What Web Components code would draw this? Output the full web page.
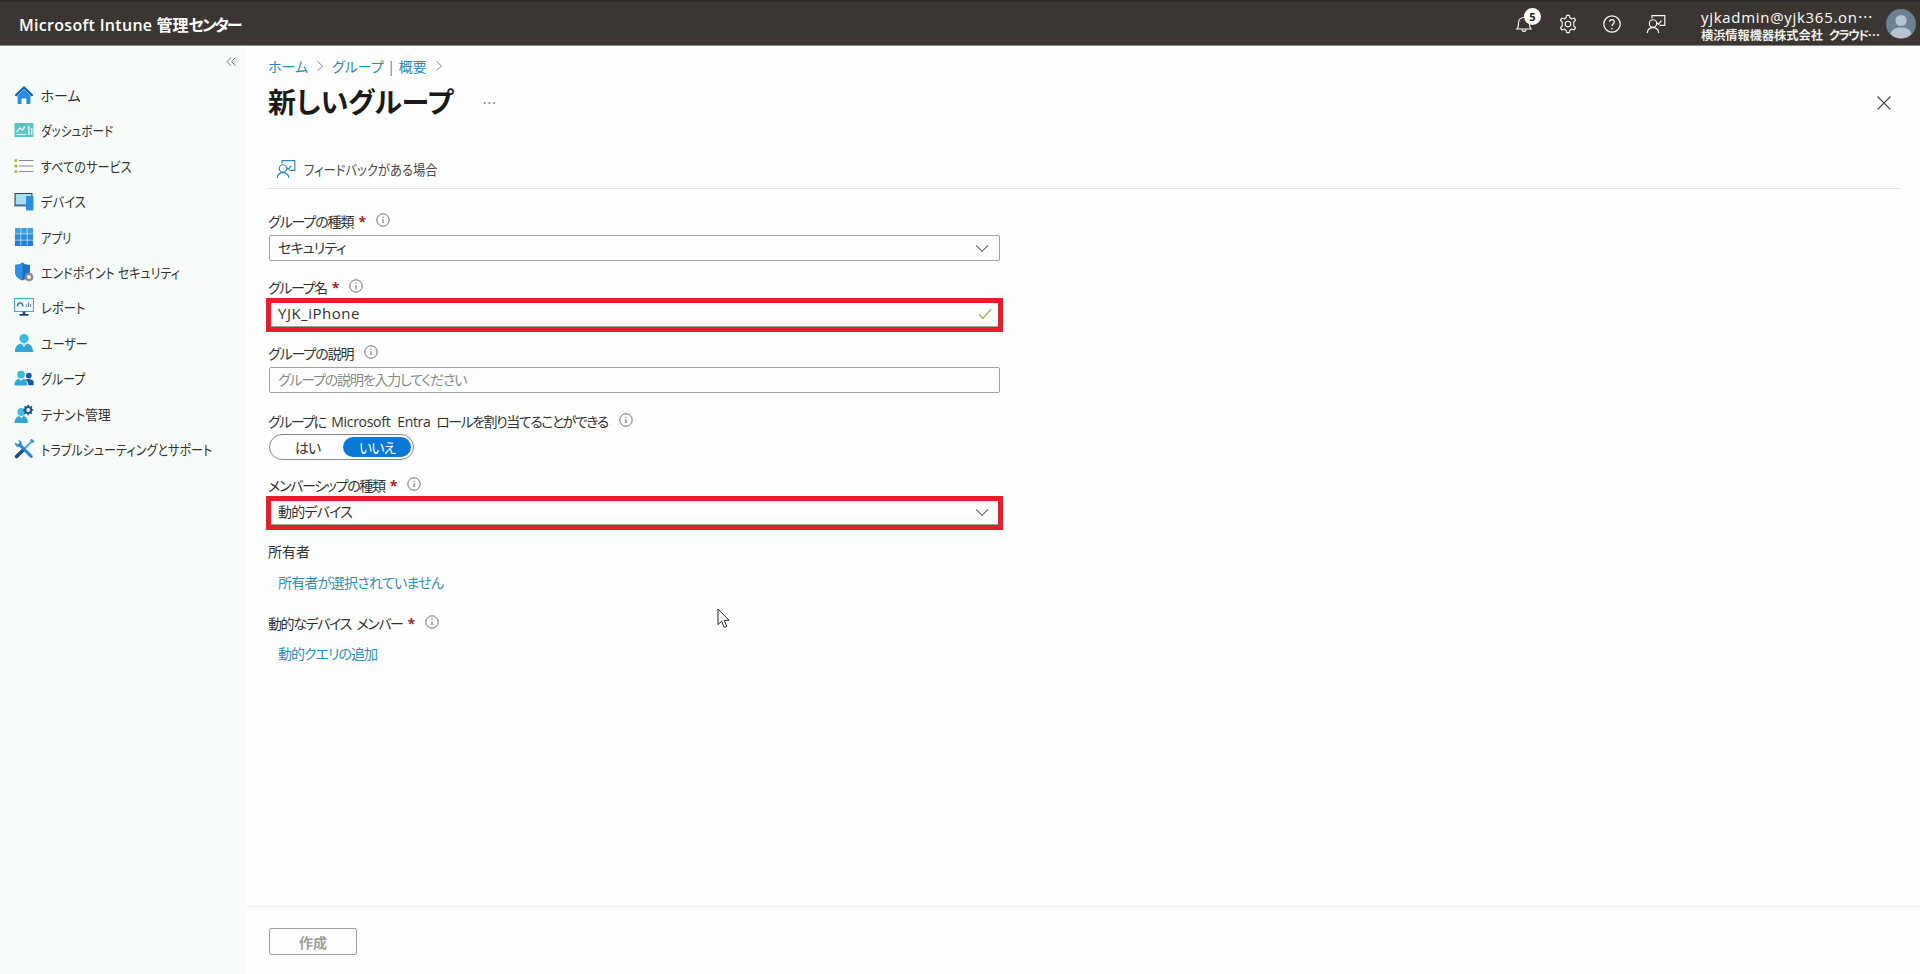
<!DOCTYPE html>
<html lang="ja"><head><meta charset="utf-8"><title>新しいグループ</title>
<style>
html,body{margin:0;padding:0;height:100%;overflow:hidden}
body{font-family:"Open Sans","Noto Sans CJK JP",sans-serif;font-size:14px;color:#323130;background:#fdfffe;font-feature-settings:"palt"}
</style></head><body>
<ms-app>
  <ms-header slot="header"></ms-header>
  <ms-sidebar slot="side">
    <ms-nav-item icon="home" sx="1">ホーム</ms-nav-item>
    <ms-nav-item icon="dash" sx=".83">ダッシュボード</ms-nav-item>
    <ms-nav-item icon="list" sx=".87">すべてのサービス</ms-nav-item>
    <ms-nav-item icon="device" sx=".88">デバイス</ms-nav-item>
    <ms-nav-item icon="apps" sx=".81">アプリ</ms-nav-item>
    <ms-nav-item icon="shield" sx=".857">エンドポイント セキュリティ</ms-nav-item>
    <ms-nav-item icon="report" sx=".88">レポート</ms-nav-item>
    <ms-nav-item icon="user" sx=".86">ユーザー</ms-nav-item>
    <ms-nav-item icon="group" sx=".86">グループ</ms-nav-item>
    <ms-nav-item icon="tenant" sx=".9">テナント管理</ms-nav-item>
    <ms-nav-item icon="tools" sx=".864">トラブルシューティングとサポート</ms-nav-item>
  </ms-sidebar>
  <ms-blade slot="main">
    <ms-field label="グループの種類" required gap="0"><ms-control kind="select" value="セキュリティ" ls="-.8"></ms-control></ms-field>
    <ms-field label="グループ名" required gap="16" ls="-1.4"><ms-control kind="check" value="YJK_iPhone" marked ls=".5" fs="15"></ms-control></ms-field>
    <ms-field label="グループの説明" gap="16"><ms-control placeholder="グループの説明を入力してください" ls="-1.2"></ms-control></ms-field>
    <ms-field label="グループに |Microsoft Entra| ロールを割り当てることができる" gap="18" tight ls="-1.5"><ms-toggle></ms-toggle></ms-field>
    <ms-field label="メンバーシップの種類" required gap="15" ls="-1.3"><ms-control kind="select" value="動的デバイス" marked ls="-.8"></ms-control></ms-field>
    <ms-field label="所有者" noinfo gap="16" ls="0"><ms-link style="margin-top:12px" ls="-.75">所有者が選択されていません</ms-link></ms-field>
    <ms-field label="動的なデバイス メンバー" required gap="20" ls="-1.4"><ms-link style="margin-top:11px" ls="-1">動的クエリの追加</ms-link></ms-field>
  </ms-blade>
</ms-app>
<script>
const ICONS={
home:`<svg viewBox="0 0 20 20" width="20" height="20"><path d="M10 1 L0.6 10 L2.2 11.4 L10 4 L17.8 11.4 L19.4 10Z" fill="#0f5fa8"/><path d="M3.6 10.4 L10 4.4 L16.4 10.4 V19 H12.4 V13.4 H7.6 V19 H3.6Z" fill="#2b8fe0"/></svg>`,
dash:`<svg viewBox="0 0 20 20" width="20" height="20"><rect x="0.5" y="3" width="19" height="14" fill="#5cc3c8"/><path d="M2.5 12 L6 8 L8.5 10 L11 6.5" fill="none" stroke="#e8f7f2" stroke-width="1.4"/><path d="M2.5 14.5 H12" stroke="#e8f7f2" stroke-width="1.2"/><rect x="14" y="6" width="1.6" height="9" fill="#e8f7f2"/><rect x="17" y="8" width="1.4" height="7" fill="#e8f7f2"/></svg>`,
list:`<svg viewBox="0 0 20 20" width="20" height="20"><g stroke="#8a8a8a" stroke-width="1.2"><path d="M5 4.5H19.5M5 10H19.5M5 15.5H19.5"/></g><g fill="#8fc03c"><circle cx="1.8" cy="4.5" r="1.5"/><circle cx="1.8" cy="10" r="1.5"/><circle cx="1.8" cy="15.5" r="1.5"/></g></svg>`,
device:`<svg viewBox="0 0 20 20" width="20" height="20"><rect x="0.5" y="2" width="18" height="13" fill="#36404d"/><rect x="1.6" y="3" width="15.8" height="10.6" fill="#a9def2"/><rect x="12" y="5" width="7.5" height="14.5" rx="0.8" fill="#2b8fe0"/><rect x="0.5" y="14" width="11.5" height="1.4" fill="#2e6fb0"/></svg>`,
apps:`<svg viewBox="0 0 20 20" width="20" height="20"><g fill="#1f7fd4"><rect x="1" y="1" width="5.6" height="5.6" fill="#3fa0e6"/><rect x="7.2" y="1" width="5.6" height="5.6" fill="#3fa0e6"/><rect x="13.4" y="1" width="5.6" height="5.6" fill="#3fa0e6"/><rect x="1" y="7.2" width="5.6" height="5.6" fill="#2a8bdd"/><rect x="7.2" y="7.2" width="5.6" height="5.6" fill="#2a8bdd"/><rect x="13.4" y="7.2" width="5.6" height="5.6" fill="#2a8bdd"/><rect x="1" y="13.4" width="5.6" height="5.6"/><rect x="7.2" y="13.4" width="5.6" height="5.6"/><rect x="13.4" y="13.4" width="5.6" height="5.6"/></g></svg>`,
shield:`<svg viewBox="0 0 20 20" width="20" height="20"><path d="M8.5 0.6 C6 2.6 3.4 3 1 3 V9.5 C1 14 4.2 16.8 8.5 18.6 C12.8 16.8 16 14 16 9.5 V3 C13.6 3 11 2.6 8.5 0.6Z" fill="#1f6fc4"/><path d="M8.5 0.6 V18.6 C4.2 16.8 1 14 1 9.5 V3 C3.4 3 6 2.6 8.5 0.6Z" fill="#2f8fe0"/><circle cx="15" cy="15" r="3" fill="#f8fcf9" stroke="#8a8d90" stroke-width="2.2"/><g stroke="#8a8d90" stroke-width="1.5"><path d="M15 10.5V12M15 18V19.5M10.5 15H12M18 15H19.5M11.8 11.8L12.9 12.9M17.1 17.1L18.2 18.2M18.2 11.8L17.1 12.9M12.9 17.1L11.8 18.2"/></g></svg>`,
report:`<svg viewBox="0 0 20 20" width="20" height="20"><rect x="0.5" y="1.5" width="19" height="13" fill="#eaf6fb" stroke="#4aa5c9" stroke-width="1"/><path d="M3.8 9.5 A2.6 2.6 0 1 1 8.6 9.5" fill="none" stroke="#1d6ea8" stroke-width="1.3"/><path d="M12.5 10V7.5M14.5 10V5.5M16.5 10V7" stroke="#7c8a94" stroke-width="1.2"/><rect x="8.6" y="14.5" width="2.8" height="2.8" fill="#1a4f86"/><rect x="5.5" y="17" width="9" height="1.8" fill="#1a4f86"/></svg>`,
user:`<svg viewBox="0 0 20 20" width="20" height="20"><circle cx="10" cy="5.6" r="4.6" fill="#3bbbe0"/><path d="M1 19 C1 13 4.5 11 7 10.6 L10 14 L13 10.6 C15.5 11 19 13 19 19Z" fill="#2fa8d4"/><path d="M7.6 10.6 L10 13.6 L12.4 10.6Z" fill="#a9e3f3"/></svg>`,
group:`<svg viewBox="0 0 20 20" width="20" height="20"><circle cx="7" cy="6.6" r="3.9" fill="#3bbbe0"/><path d="M0.4 17.6 C0.4 13 3 11 5 10.8 L7 13 L9 10.8 C11 11 13.4 13 13.4 17.6Z" fill="#2fa8d4"/><circle cx="14.8" cy="7.6" r="2.9" fill="#1f5aa0"/><path d="M11 11.4 C13 10.6 17 10.6 19.6 13 V17.2 H14.4 C14.4 14.5 13 12.5 11 11.4Z" fill="#1f5aa0"/></svg>`,
tenant:`<svg viewBox="0 0 20 20" width="20" height="20"><circle cx="7.4" cy="8" r="3.9" fill="#3bbbe0"/><path d="M0.6 19 C0.6 14.4 3.4 12.2 5.4 12 L7.4 14.2 L9.4 12 C11.4 12.2 14 14.4 14 19Z" fill="#2fa8d4"/><circle cx="14.2" cy="6" r="3" fill="none" stroke="#1f5aa0" stroke-width="2.2"/><path d="M14.2 .8V2.5M14.2 9.5V11.2M9 6H10.7M17.7 6H19.4M10.5 2.3L11.7 3.5M16.7 8.5L17.9 9.7M17.9 2.3L16.7 3.5M11.7 8.5L10.5 9.7" stroke="#1f5aa0" stroke-width="1.7"/></svg>`,
tools:`<svg viewBox="0 0 20 20" width="20" height="20" fill="none" stroke-linecap="round"><path d="M18.6 1.6 L11 9.2" stroke="#3aa0e4" stroke-width="1.9"/><path d="M17.4 1.2 L19 2.8" stroke="#2f8fd8" stroke-width="2.2"/><path d="M9.8 10.4 L2.6 17.6" stroke="#1c4f80" stroke-width="3.6"/><path d="M6.2 6.4 L17.2 17.4" stroke="#2a86d6" stroke-width="3"/><path d="M1.2 4.2 C1 7.4 4.4 8.6 6.6 6.8 C8.2 5 7.4 1.8 4.6 1 L6 3.6 L4 5.6Z" fill="#2a86d6" stroke="#2a86d6" stroke-width=".5" stroke-linejoin="round"/></svg>`,
info:`<svg viewBox="0 0 14 14" width="14" height="14"><circle cx="7" cy="7" r="6.2" fill="none" stroke="#605e5c" stroke-width=".9"/><path d="M7 6.2V10.2" stroke="#605e5c" stroke-width="1"/><circle cx="7" cy="4.2" r=".65" fill="#605e5c"/></svg>`,
chev:`<svg viewBox="0 0 16 10" width="14" height="9" style="margin-right:2px"><path d="M1.2 1.4 L8 8.2 L14.8 1.4" fill="none" stroke="#605e5c" stroke-width="1.2"/></svg>`,
check:`<svg viewBox="0 0 14 12" width="14" height="12" style="margin-right:-1px"><path d="M1 6.4 L4.8 10.4 L13 1.4" fill="none" stroke="#7fb23a" stroke-width="1.2"/></svg>`,
feedback:c=>`<svg viewBox="0 0 20 20" width="20" height="20" fill="none" stroke="${c}" stroke-width="1.15"><circle cx="7" cy="9.4" r="3.7"/><path d="M1.2 19 C1.6 15.4 4 13.6 7 13.6 C10 13.6 12.4 15.4 12.8 19"/><path d="M6 4.6 V1.6 H18.8 V11.4 H13.4"/><path d="M10.6 8.4 L12.4 10.4 L15.4 6.6"/></svg>`,
};
const CJK='"Noto Sans CJK JP",sans-serif';
function def(name,css,html){
  class C extends HTMLElement{
    constructor(){super();this.attachShadow({mode:"open"})}
    connectedCallback(){const a=n=>this.getAttribute(n),h=n=>this.hasAttribute(n);
      this.shadowRoot.innerHTML=`<style>${css}</style>`+html(a,h,this)}
  }
  customElements.define(name,C);
}
def("ms-app",`:host{display:grid;grid-template-rows:46px 1fr;grid-template-columns:246px 1fr;height:974px;width:1920px}
 ::slotted([slot=header]){grid-column:1/3}`,
 ()=>`<slot name="header"></slot><slot name="side"></slot><slot name="main"></slot>`);
def("ms-header",`:host{display:flex;align-items:center;height:46px;box-sizing:border-box;background:#3b3631;border-top:2px solid #2a2a2a;border-bottom:1px solid #8d8a86;color:#fff;padding-left:19px;position:relative}
 .brand{font-size:16px;font-weight:600;white-space:nowrap;flex:1}
 .brand b{font-weight:600;letter-spacing:.3px}
 .brand i{font-style:normal;letter-spacing:-2px}
 .ic{width:44px;display:flex;justify-content:center;align-items:center;position:relative;top:.5px}
 .badge{position:absolute;left:22px;top:-6px;width:17px;height:17px;border-radius:50%;background:#fff;color:#222;font-size:11px;font-weight:700;display:flex;align-items:center;justify-content:center;line-height:1}
 .user{width:176px;margin-left:23px;display:flex;flex-direction:column;color:#fff;padding-top:4px}
 .u1{font-size:15px;line-height:19px;white-space:nowrap;letter-spacing:.7px}
 .u2{font-size:12.2px;font-weight:700;line-height:16px;white-space:nowrap;color:#eee}
 .u2 i{font-style:normal;letter-spacing:-1.4px;margin-left:6px}
 .e{font-family:${CJK};letter-spacing:0}
 .av{width:30px;height:30px;margin:0 4px 0 9px;flex:none}`,
 ()=>`<div class="brand"><b>Microsoft Intune</b> 管理<i>センター</i></div>
 <div class="ic"><svg viewBox="0 0 20 20" width="20" height="20" fill="none" stroke="#fff" stroke-width="1.1"><path d="M3 15 C4.5 13.5 4.5 12 4.5 9 C4.5 5.5 7 3.5 10 3.5 C13 3.5 15.5 5.5 15.5 9 C15.5 12 15.5 13.5 17 15Z"/><path d="M8 15.5 C8 18 12 18 12 15.5"/></svg><span class="badge">5</span></div>
 <div class="ic"><svg viewBox="0 0 20 20" width="20" height="20" fill="none" stroke="#fff" stroke-width="1.1"><circle cx="10" cy="10" r="2.8"/><path d="M8.6 1.4 H11.4 L11.9 3.8 L13.9 4.9 L16.2 4 L17.6 6.4 L15.8 8 V10 V12 L17.6 13.6 L16.2 16 L13.9 15.1 L11.9 16.2 L11.4 18.6 H8.6 L8.1 16.2 L6.1 15.1 L3.8 16 L2.4 13.6 L4.2 12 V8 L2.4 6.4 L3.8 4 L6.1 4.9 L8.1 3.8Z" stroke-linejoin="round"/></svg></div>
 <div class="ic"><svg viewBox="0 0 20 20" width="20" height="20" fill="none" stroke="#fff" stroke-width="1.2"><circle cx="10" cy="10" r="8.2"/><path d="M7.6 7.8 C7.6 4.9 12.4 4.9 12.4 7.8 C12.4 9.8 10 9.6 10 12"/><circle cx="10" cy="14.6" r=".8" fill="#fff" stroke="none"/></svg></div>
 <div class="ic">${ICONS.feedback("#fff")}</div>
 <div class="user"><div class="u1">yjkadmin@yjk365.on<span class="e">…</span></div><div class="u2">横浜情報機器株式会社<i>クラウド<span class="e">…</span></i></div></div>
 <svg class="av" viewBox="0 0 30 30"><circle cx="15" cy="15" r="15" fill="#6c7f93"/><circle cx="15" cy="11.5" r="5.6" fill="#b8c4cf"/><path d="M4.5 25 C6 20 10 18.6 15 18.6 C20 18.6 24 20 25.5 25 A15 15 0 0 1 4.5 25Z" fill="#b8c4cf"/></svg>`);
def("ms-sidebar",`:host{display:block;background:#f8fcf9}
 .c{height:31.3px;box-sizing:border-box;display:flex;justify-content:flex-end;align-items:center;padding-right:9px}`,
 ()=>`<div class="c"><svg viewBox="0 0 12 12" width="11" height="11" fill="none" stroke="#6b6b6b" stroke-width="1"><path d="M5.6 1.5 L1.4 6 L5.6 10.5M10.4 1.5 L6.2 6 L10.4 10.5"/></svg></div><slot></slot>`);
def("ms-nav-item",`:host{display:flex;align-items:center;gap:6.5px;height:35.4px;padding-left:14px;font-size:14px;color:#323130;white-space:nowrap}
 svg{display:block;flex:none}
 .t{display:inline-block;transform-origin:0 50%}`,(a)=>`${ICONS[a("icon")]}<span class="t" style="transform:scaleX(${a("sx")||1})"><slot></slot></span>`);
def("ms-blade",`:host{display:flex;flex-direction:column;position:relative;background:#fdfffe;min-width:0}
 .top{padding:10px 19px 0 22px}
 .crumb{display:flex;align-items:center;height:20px;font-size:14px;color:#3089b3;gap:8px}
 .crumb svg{display:block}
 .title{display:flex;align-items:center;height:36px;margin-top:8px;padding-right:9px}
 h1{font-size:28px;font-weight:700;color:#1b1a19;margin:0;line-height:36px;white-space:nowrap}
 .more{margin-left:29px;color:#605e5c;font-size:14px;font-family:${CJK};flex:1}
 .title svg{margin-top:2px}
 .cmd{display:flex;align-items:center;gap:8px;height:39px;padding-bottom:1px;box-sizing:border-box;margin-top:30px;border-bottom:1px solid #e4e6e5;padding-left:8px;font-size:14px;color:#484644}
 .cmd span{display:inline-block;transform:scaleX(.88);transform-origin:0 50%;white-space:nowrap}
 .form{flex:1;padding:22px 0 0 22px;display:block}
 .foot{height:68px;box-sizing:border-box;border-top:1px solid #eef1ef;padding:21px 0 0 23px}
 button{width:88px;height:27px;box-sizing:border-box;background:#fdfdfb;border:1px solid #a19f9d;border-radius:2px;color:#a19f9d;font:700 14px "Open Sans","Noto Sans CJK JP",sans-serif;font-feature-settings:"palt";padding:0}
 .cur{position:absolute;left:471px;top:562px;display:block}`,
 ()=>`<div class="top"><div class="crumb"><span>ホーム</span><svg viewBox="0 0 8 12" width="8" height="12" fill="none" stroke="#8a8886"><path d="M1.5 1.5 L6.5 6 L1.5 10.5"/></svg><span>グループ | 概要</span><svg viewBox="0 0 8 12" width="8" height="12" fill="none" stroke="#8a8886"><path d="M1.5 1.5 L6.5 6 L1.5 10.5"/></svg></div>
 <div class="title"><h1>新しいグループ</h1><span class="more">…</span><svg viewBox="0 0 16 16" width="16" height="16" fill="none" stroke="#484644" stroke-width="1.1"><path d="M1.5 1.5 L14.5 14.5M14.5 1.5 L1.5 14.5"/></svg></div>
 <div class="cmd">${ICONS.feedback("#2f86ad")}<span>フィードバックがある場合</span></div></div>
 <div class="form"><slot></slot></div>
 <div class="foot"><button disabled>作成</button></div>
 <svg class="cur" viewBox="0 0 14 21" width="14" height="21"><path d="M1 1 V16.5 L4.6 13.2 L7.2 19.4 L9.8 18.3 L7.2 12.4 L12 12.2Z" fill="#fff" stroke="#222" stroke-width="1"/></svg>`);
def("ms-field",`:host{display:block}
 .l{display:flex;align-items:center;height:20px;font-size:14px;color:#323130;white-space:pre}
 .t{letter-spacing:var(--ls);word-spacing:3.5px}
 .t b{font-weight:400;letter-spacing:-.3px}
 .s{color:#a4262c;margin-left:5px;font-weight:700}
 .i{display:block;margin-left:11px}
 .s + .i{margin-left:10px}
 .body{margin-top:4px}
 .tight{margin-top:3px}`,
 (a,h,el)=>{el.style.marginTop=(a("gap")||0)+"px";el.style.setProperty("--ls",(a("ls")??"-1.1")+"px");
   const t=a("label").split("|").map((s,i)=>i%2?`<b>${s}</b>`:s).join("");
   return `<div class="l"><span class="t">${t}</span>${h("required")?'<span class="s">*</span>':''}${h("noinfo")?'':`<span class="i">${ICONS.info}</span>`}</div><div class="body ${h("tight")?'tight':''}"><slot></slot></div>`});
def("ms-control",`:host{display:block;position:relative;width:731px;height:26px;margin-left:1px;box-sizing:border-box;border:1px solid #a19f9d;border-radius:2px;background:#fdfffe}
 .w{display:flex;align-items:center;height:100%;padding:0 8px 0 8px;justify-content:space-between;font-size:14px;color:#323130}
 .v{position:relative;top:-1px}
 .p{color:#8a8886}
 .ic{display:flex}
 .mark{position:absolute;left:-4px;right:-4px;top:-4px;bottom:-6px;border:5px solid #e81c2b;pointer-events:none}`,
 (a,h)=>{const k=a("kind");return `<div class="w"><span class="v ${a("value")?'':'p'}" style="letter-spacing:${a("ls")||0}px;font-size:${a("fs")||14}px">${a("value")||a("placeholder")}</span><span class="ic">${k==="select"?ICONS.chev:k==="check"?ICONS.check:''}</span></div>${h("marked")?'<div class="mark"></div>':''}`});
def("ms-toggle",`:host{display:flex;margin-left:1px;width:145px;height:26px;box-sizing:border-box;border:1px solid #8a8886;border-radius:13px;padding:2px;font-size:14px;color:#323130;letter-spacing:-1px}
 span{display:flex;align-items:center;justify-content:center;border-radius:11px;flex:1}
 .on{background:#0a78d4;color:#fff;flex:none;width:68px}`,()=>`<span>はい</span><span class="on">いいえ</span>`);
def("ms-link",`:host{display:block;height:20px;line-height:20px;margin:6px 0 0 10px;font-size:14px;color:#2f8fb8;white-space:nowrap}`,(a,h,el)=>{el.style.letterSpacing=(a("ls")||0)+"px";return `<slot></slot>`});
</script>
</body></html>
